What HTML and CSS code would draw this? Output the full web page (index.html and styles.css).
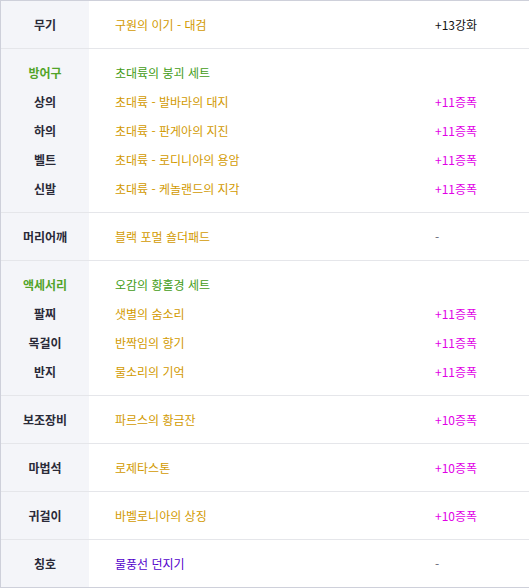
FILE: index.html
```html
<!DOCTYPE html>
<html lang="ko">
<head>
    <meta charset="UTF-8">
    <meta name="viewport" content="width=device-width, initial-scale=1.0">
    <title>장착 장비</title>
    <link rel="stylesheet" href="styles.css">
</head>
<body>

    <div class="equip">
        <table>
            <tbody>
                <tr><th>무기</th><td class="name gold">구원의 이기 - 대검</td><td class="opt">+13강화</td></tr>
            </tbody>
            <tbody>
                <tr><th class="set">방어구</th><td class="name green">초대륙의 붕괴 세트</td><td class="opt"></td></tr>
                <tr><th>상의</th><td class="name gold">초대륙 - 발바라의 대지</td><td class="opt amp">+11증폭</td></tr>
                <tr><th>하의</th><td class="name gold">초대륙 - 판게아의 지진</td><td class="opt amp">+11증폭</td></tr>
                <tr><th>벨트</th><td class="name gold">초대륙 - 로디니아의 용암</td><td class="opt amp">+11증폭</td></tr>
                <tr><th>신발</th><td class="name gold">초대륙 - 케놀랜드의 지각</td><td class="opt amp">+11증폭</td></tr>
            </tbody>
            <tbody>
                <tr><th>머리어깨</th><td class="name gold">블랙 포멀 숄더패드</td><td class="opt none">-</td></tr>
            </tbody>
            <tbody>
                <tr><th class="set">액세서리</th><td class="name green">오감의 황홀경 세트</td><td class="opt"></td></tr>
                <tr><th>팔찌</th><td class="name gold">샛별의 숨소리</td><td class="opt amp">+11증폭</td></tr>
                <tr><th>목걸이</th><td class="name gold">반짝임의 향기</td><td class="opt amp">+11증폭</td></tr>
                <tr><th>반지</th><td class="name gold">물소리의 기억</td><td class="opt amp">+11증폭</td></tr>
            </tbody>
            <tbody>
                <tr><th>보조장비</th><td class="name gold">파르스의 황금잔</td><td class="opt amp">+10증폭</td></tr>
            </tbody>
            <tbody>
                <tr><th>마법석</th><td class="name gold">로제타스톤</td><td class="opt amp">+10증폭</td></tr>
            </tbody>
            <tbody>
                <tr><th>귀걸이</th><td class="name gold">바벨로니아의 상징</td><td class="opt amp">+10증폭</td></tr>
            </tbody>
            <tbody>
                <tr><th>칭호</th><td class="name purple">물풍선 던지기</td><td class="opt none">-</td></tr>
            </tbody>
        </table>
    </div>

</body>
</html>
```

FILE: styles.css
```css
body {
    margin: 0;
    background: #fff;
    font-family: "Noto Sans CJK KR", "Noto Sans", sans-serif;
    font-size: 12px;
}
.equip {
    border-top: 1px solid #ced0da;
    border-bottom: 1px solid #ced0da;
    border-left: 1px solid #ced0da;
}
.equip table {
    width: 100%;
    border-collapse: collapse;
}
.equip tbody + tbody {
    border-top: 1px solid #e5e6ea;
}
.equip th,
.equip td {
    padding: 0;
    line-height: 29px;
    white-space: nowrap;
}
.equip tr:first-child > * {
    padding-top: 9px;
}
.equip tr:last-child > * {
    padding-bottom: 9px;
}
.equip th {
    width: 88px;
    background: #f4f5f9;
    color: #2a2a38;
    font-weight: bold;
    text-align: center;
}
.equip th.set {
    color: #52a429;
}
.name {
    padding-left: 26px !important;
    text-align: left;
}
.opt {
    width: 94px;
    color: #111;
}
.gold {
    color: #d29a00;
}
.green {
    color: #439c16;
}
.purple {
    color: #5200cc;
}
.amp {
    color: #e100e6;
}
.none {
    color: #6a6a78;
}
```
